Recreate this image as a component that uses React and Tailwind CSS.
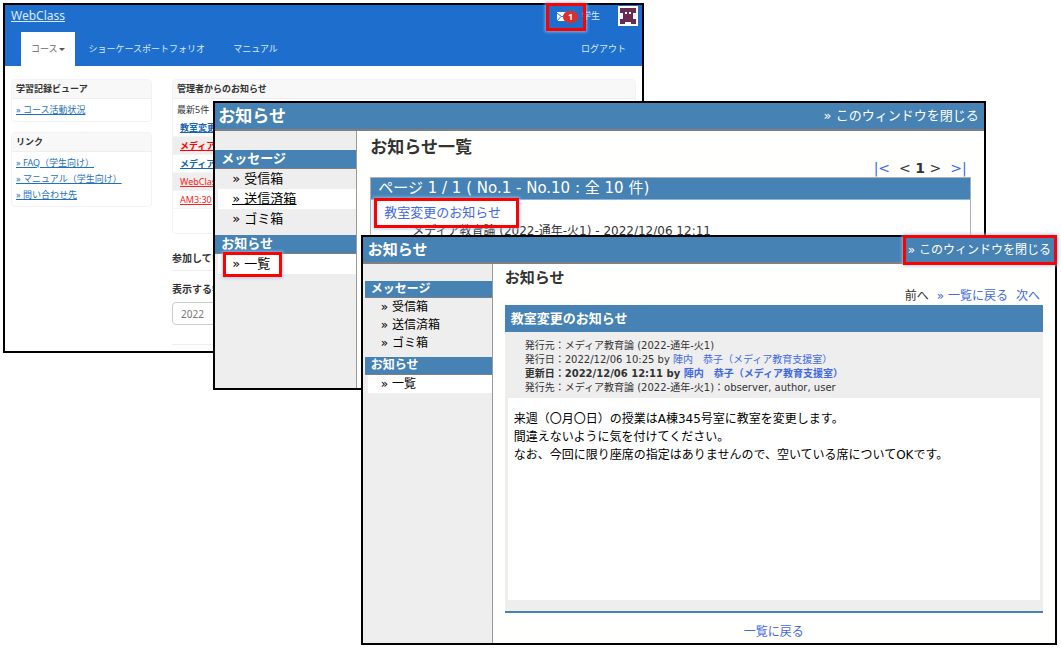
import React from 'react'
import { clsx } from 'clsx'

const messageLinks = ['受信箱', '送信済箱', 'ゴミ箱']

const linkPanels = [
  { title: '学習記録ビューア', links: ['コース活動状況'] },
  { title: 'リンク', links: ['FAQ（学生向け）', 'マニュアル（学生向け）', '問い合わせ先'] },
]

const notices = [
  { title: '教室変更', style: 'font-bold text-[#1464b4]' },
  { title: 'メディア', style: 'font-bold text-[#ff0000]' },
  { title: 'メディア', style: 'font-bold text-[#1464b4]' },
  { title: 'WebClass', style: 'text-[#ff2020]' },
  { title: 'AM3:30', style: 'text-[#ff2020]' },
]

const Highlight = ({ className }) => (
  <span
    aria-hidden="true"
    className={clsx('pointer-events-none absolute border-3 border-[#ff0000] shadow-[0_0_3px_1px_rgba(150,195,235,0.8)]', className)}
  />
)

const Avatar = () => (
  <svg viewBox="0 0 20 20" className="size-5" shapeRendering="crispEdges" role="img" aria-label="学生">
    <rect width="20" height="20" fill="#fff" />
    <path fill="#6b2b4e" d="M2 2h16v5h-3v6h3v5h-5v-2H7v2H2v-5h3V7H2z" />
    <path fill="#fff" d="M7 6h2v2H7zM11 6h2v2h-2z" />
  </svg>
)

const MailIcon = () => (
  <svg viewBox="0 0 10 9" className="h-[9px] w-[10px]" aria-hidden="true">
    <rect width="10" height="9" fill="#fff" />
    <path d="M0 1l5 4 5-4M0 9l3.500-4" fill="none" stroke="#1e6fcd" strokeWidth="1" />
  </svg>
)

const CoursePage = () => (
  <section className="absolute top-[3px] right-[39.300%] left-[3px] min-h-[350px] border-2 border-black bg-white font-['Noto_Sans','Noto_Sans_CJK_JP',sans-serif] text-[9px] leading-4 text-[#333]">
    <header className="h-[61px] bg-[#1e6fcd] text-[#d9e8fa]">
      <div className="mb-[5px] flex h-[22px] items-center justify-between pr-1 pl-[6px]">
        <a href="#webclass" className="text-xs leading-4 underline">WebClass</a>
        <div className="flex items-center">
          <a href="#mail" aria-label="メッセージ 1" className="relative mr-1 flex items-center">
            <MailIcon />
            <span className="-ml-1 mt-[2px] flex h-3 w-[15px] items-center justify-center rounded-full bg-[#d9302c] text-[9px] font-bold text-white">
              1
            </span>
            <Highlight className="-top-[6px] -right-[8px] -bottom-[8px] -left-[11px]" />
          </a>
          <span className="mr-[18px]">学生</span>
          <Avatar />
        </div>
      </div>
      <nav className="flex h-[34px] items-stretch px-4">
        <button type="button" className="flex items-center bg-white px-[10px] text-[#666]">
          コース
          <span className="ml-px border-x-3 border-t-3 border-x-transparent border-t-[#555]" />
        </button>
        <a href="#portfolio" className="ml-[14px] flex items-center">ショーケースポートフォリオ</a>
        <a href="#manual" className="ml-7 flex items-center">マニュアル</a>
        <a href="#logout" className="ml-auto flex items-center">ログアウト</a>
      </nav>
    </header>

    <div className="flex gap-5 px-[6px] pt-[13px]">
      <aside className="flex w-[141px] shrink-0 flex-col gap-[10px]">
        {linkPanels.map((panel) => (
          <div key={panel.title} className="rounded-sm border border-[#f2f2f2]">
            <h2 className="bg-[#f8f8f8] px-1 py-px font-bold">{panel.title}</h2>
            <ul className="border-t border-[#eee] px-1 py-[3px]">
              {panel.links.map((link) => (
                <li key={link}>
                  <a href="#link" className="text-[#1e70c0] underline">» {link}</a>
                </li>
              ))}
            </ul>
          </div>
        ))}
      </aside>

      <main className="grow">
        <div className="min-h-[155px] rounded-sm border border-[#f2f2f2]">
          <h2 className="bg-[#f8f8f8] px-1 py-px font-bold">管理者からのお知らせ</h2>
          <p className="border-t border-[#eee] px-1 pt-[3px] pb-px">最新5件</p>
          <ul>
            {notices.map((notice, i) => (
              <li key={i} className={clsx('border-b border-[#f4f4f4] px-[7px] pt-px', i % 2 === 1 && 'bg-[#eee]')}>
                <a href="#notice" className={clsx('block underline', notice.style)}>{notice.title}</a>
              </li>
            ))}
          </ul>
        </div>
        <h3 className="mt-4 border-b border-[#eee] pb-1 text-[10px] font-bold">参加している</h3>
        <label htmlFor="year" className="mt-[10px] block text-[10px] font-bold">表示する学期</label>
        <select
          id="year"
          className="mt-[5px] block h-[23px] w-40 appearance-none rounded-sm border border-[#ccc] bg-white px-2 text-[10px] text-[#777]"
        >
          <option>2022</option>
        </select>
        <hr className="mt-[19px] border-[#eee]" />
      </main>
    </div>
  </section>
)

const MenuHeading = ({ children, className }) => (
  <h2 className={clsx('border-b border-[#808080] bg-[#4682b4] px-[6px] font-bold text-white', className)}>{children}</h2>
)

const NoticeListWindow = () => (
  <section className="absolute top-[101px] right-[7.100%] left-[20.100%] flex min-h-[289px] flex-col overflow-hidden border-2 border-black bg-[#fffffd] font-['DejaVu_Sans','Noto_Sans_CJK_JP',sans-serif] text-[13px] text-[#333]">
    <header className="flex h-7 items-center justify-between border-b-2 border-[#808080] bg-[#4682b4] pr-[5px] pl-[3px] text-white">
      <h1 className="text-[17px] leading-6 font-bold">お知らせ</h1>
      <a href="#close" className="leading-6">» このウィンドウを閉じる</a>
    </header>
    <div className="flex grow">
      <nav className="w-[142px] shrink-0 border-r border-[#999] bg-[#eee] pt-[19px] leading-5 text-black">
        <MenuHeading className="leading-[18px]">メッセージ</MenuHeading>
        <ul>
          {messageLinks.map((item) => (
            <li key={item} className={clsx('ml-[3px] pl-[14px]', item === '送信済箱' && 'bg-white underline')}>
              <a href="#box">» {item}</a>
            </li>
          ))}
        </ul>
        <MenuHeading className="mt-[6px] leading-[18px]">お知らせ</MenuHeading>
        <div className="ml-[3px] bg-white pl-[14px]">
          <a href="#list" className="relative">
            » 一覧
            <Highlight className="-top-1 -right-[12px] -bottom-[6px] -left-[9px]" />
          </a>
        </div>
      </nav>
      <main className="grow px-[13px] pt-1">
        <h2 className="text-[17px] leading-6 font-bold">お知らせ一覧</h2>
        <div className="flex justify-end gap-[9px] pr-1 text-sm leading-[18px]">
          <a href="#first" className="text-[#4169e1]">|&lt;</a>
          <span>&lt; <b>1</b> &gt;</span>
          <a href="#last" className="text-[#4169e1]">&gt;|</a>
        </div>
        <table className="w-full border border-[#b0b0b0] bg-white">
          <thead>
            <tr>
              <th className="border-b border-[#8fb4d4] bg-[#4682b4] px-[7px] text-left text-[15px] leading-[21px] font-normal text-white">
                ページ 1 / 1 ( No.1 - No.10 : 全 10 件)
              </th>
            </tr>
          </thead>
          <tbody>
            <tr>
              <td className="px-[13px] pt-[3px]">
                <a href="#notice" className="relative inline-block leading-[18px] text-[#4169e1]">
                  教室変更のお知らせ
                  <Highlight className="-top-[6px] -right-[18px] -bottom-[6px] -left-[10px] z-10" />
                </a>
                <p className="pl-7 text-xs leading-4">メディア教育論 (2022-通年-火1) - 2022/12/06 12:11</p>
              </td>
            </tr>
          </tbody>
        </table>
      </main>
    </div>
  </section>
)

const NoticeWindow = () => (
  <section className="absolute top-[235px] right-[4px] left-[34%] flex min-h-[410px] flex-col border-2 border-black bg-[#fffffd] font-['DejaVu_Sans','Noto_Sans_CJK_JP',sans-serif] text-xs text-[#333]">
    <header className="flex h-[27px] items-center justify-between border-b-2 border-[#808080] bg-[#4682b4] pr-1 pl-[5px] text-white">
      <h1 className="text-[15px] leading-6 font-bold">お知らせ</h1>
      <a href="#close" className="relative leading-6">
        » このウィンドウを閉じる
        <Highlight className="-top-[3px] -right-[6px] -bottom-[3px] -left-[5px]" />
      </a>
    </header>
    <div className="flex grow">
      <nav className="w-[130px] shrink-0 border-r border-[#999] bg-[#eee] pt-[17px] pl-[2px] leading-[18px] text-black">
        <MenuHeading className="leading-4">メッセージ</MenuHeading>
        <ul>
          {messageLinks.map((item) => (
            <li key={item} className="pl-4">
              <a href="#box">» {item}</a>
            </li>
          ))}
        </ul>
        <MenuHeading className="mt-[5px] leading-[17px]">お知らせ</MenuHeading>
        <div className="ml-[3px] bg-white pl-[13px]">
          <a href="#list">» 一覧</a>
        </div>
      </nav>
      <main className="grow px-3 pt-1">
        <h2 className="text-[15px] leading-5 font-bold">お知らせ</h2>
        <div className="flex justify-end gap-2 pr-[3px] leading-[17px]">
          <span>前へ</span>
          <a href="#list" className="text-[#4169e1]">» 一覧に戻る</a>
          <a href="#next" className="text-[#4169e1]">次へ</a>
        </div>
        <article className="border-b-2 border-[#4682b4] bg-[#eee] pb-[11px]">
          <h3 className="bg-[#4682b4] px-[6px] text-[13px] leading-[27px] font-bold text-white">教室変更のお知らせ</h3>
          <div className="px-5 pt-[7px] pb-[3px] text-[10px] leading-[14px]">
            <p>発行元：メディア教育論 (2022-通年-火1)</p>
            <p>発行日：2022/12/06 10:25 by <a href="#author" className="text-[#4169e1]">陣内　恭子（メディア教育支援室）</a></p>
            <p className="font-bold">更新日：2022/12/06 12:11 by <a href="#author" className="text-[#4169e1]">陣内　恭子（メディア教育支援室）</a></p>
            <p>発行先：メディア教育論 (2022-通年-火1)：observer, author, user</p>
          </div>
          <div className="mx-[3px] min-h-[202px] bg-white px-[6px] pt-3 leading-[18px] text-black">
            <p>来週（〇月〇日）の授業はA棟345号室に教室を変更します。</p>
            <p>間違えないように気を付けてください。</p>
            <p>なお、今回に限り座席の指定はありませんので、空いている席についてOKです。</p>
          </div>
        </article>
        <p className="pt-[10px] text-center leading-[18px]">
          <a href="#list" className="text-[#4169e1]">一覧に戻る</a>
        </p>
      </main>
    </div>
  </section>
)

const App = () => {
  return (
    <div className="relative min-h-screen overflow-hidden bg-white">
      <CoursePage />
      <NoticeListWindow />
      <NoticeWindow />
    </div>
  )
}

export default App
